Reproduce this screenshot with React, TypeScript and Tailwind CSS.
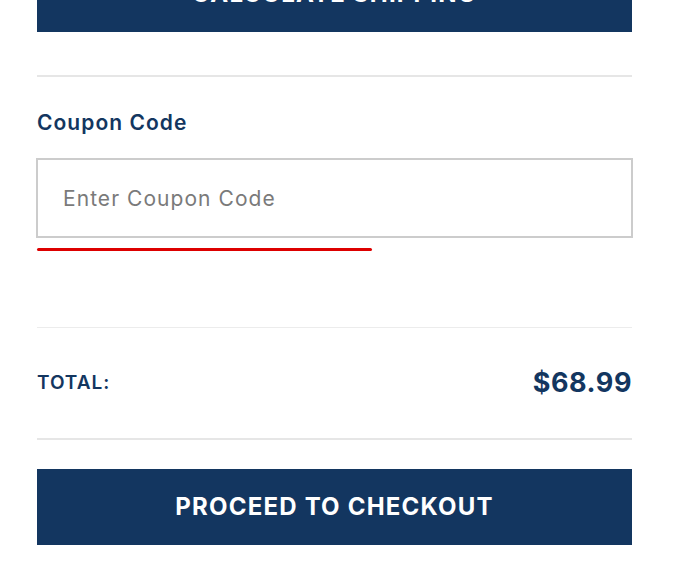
import { useState } from "react"

// Cart summary footer: shipping button, coupon field, total and checkout

export default function App() {
  const [coupon, setCoupon] = useState("")

  return (
    <div className="min-h-screen bg-white font-['Inter','Noto_Sans',sans-serif]">
      <div className="mx-[37px] w-[595px] -mt-[44px]">
        <button className="flex h-[76px] w-full items-center justify-center bg-[#133660] text-[24px] font-bold uppercase tracking-[0.05em] text-white">
          Calculate Shipping
        </button>

        <div className="mt-[43px] border-t-2 border-[#e6e6e6]" />

        <div className="pt-[33px]">
          <label className="block text-[21px] font-semibold leading-[26px] tracking-[0.05em] text-[#133660]">
            Coupon Code
          </label>
          <input
            value={coupon}
            onChange={(e) => setCoupon(e.target.value)}
            placeholder="Enter Coupon Code"
            className="-ml-px mt-[22px] h-[80px] w-[597px] border-2 border-[#cccccc] bg-white px-[25px] text-[21px] tracking-[0.05em] text-[#555] outline-none placeholder:text-[#7a7a7a]"
          />
          <div className="mt-[10px] h-[3px] w-[335px] rounded-full bg-[#dd0000]" />
        </div>

        <div className="mt-[76px] border-t border-[#ececec]" />

        <div className="flex h-[110px] items-center justify-between">
          <span className="text-[19px] font-semibold uppercase tracking-[0.05em] text-[#133660]">
            Total:
          </span>
          <span className="text-[27px] font-bold tracking-[0.02em] text-[#133660]">
            $68.99
          </span>
        </div>

        <div className="border-t-2 border-[#e6e6e6]" />

        <button className="mt-[29px] flex h-[76px] w-full items-center justify-center bg-[#133660] text-[24px] font-bold uppercase tracking-[0.05em] text-white">
          Proceed to Checkout
        </button>
      </div>
    </div>
  )
}
